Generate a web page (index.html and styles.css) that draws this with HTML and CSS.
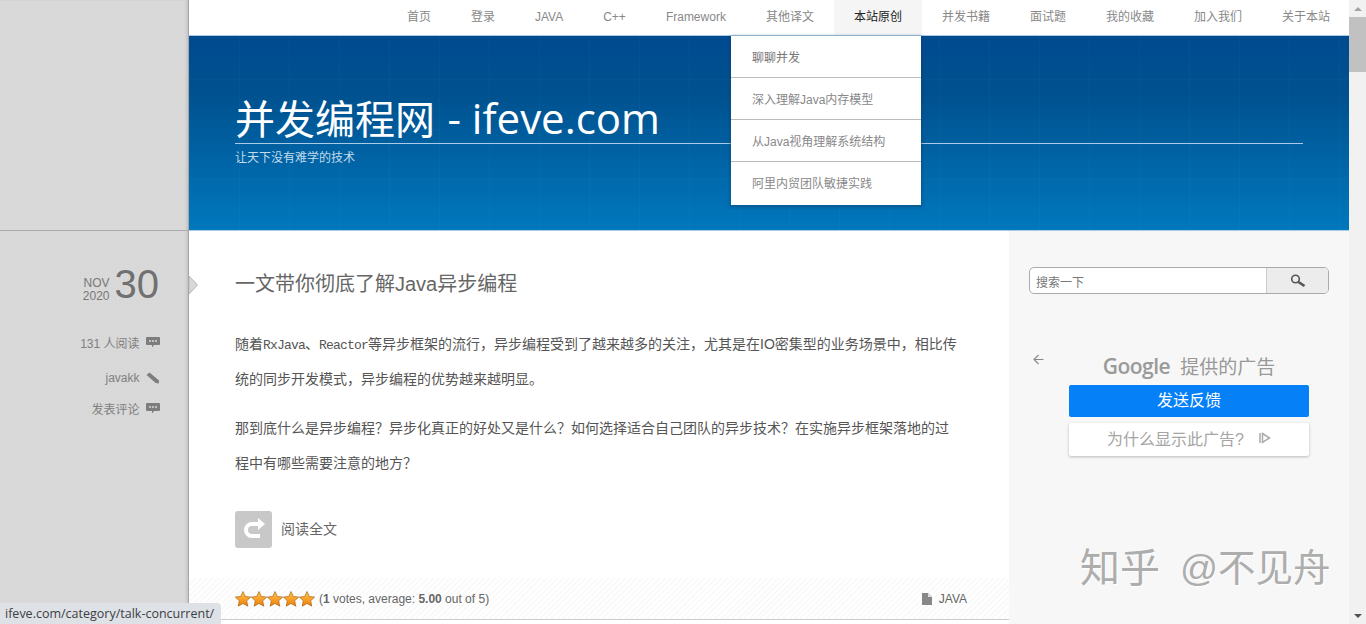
FILE: index.html
```html
<!DOCTYPE html>
<html lang="zh">
<head>
    <meta charset="UTF-8">
    <title>并发编程网 - ifeve.com</title>
    <link rel="stylesheet" href="styles.css">
</head>
<body>
    <div class="page">
        <!-- Left rail with the post meta -->
        <aside class="rail">
            <div class="rail-top"></div>
            <div class="post-date">
                <div class="month-year"><span>NOV</span><span>2020</span></div>
                <div class="day">30</div>
            </div>
            <ul class="post-meta">
                <li>131 人阅读
                    <svg class="meta-icon" viewBox="0 0 14 12"><path d="M1 1h12a1 1 0 0 1 1 1v6a1 1 0 0 1-1 1H8l-2 2.500V9H1a1 1 0 0 1-1-1V2a1 1 0 0 1 1-1z"/><path class="dots" d="M3 4.200h2v1.600H3zM6 4.200h2v1.600H6zM9 4.200h2v1.600H9z"/></svg>
                </li>
                <li>javakk
                    <svg class="meta-icon" viewBox="0 0 14 12"><path d="M3.500 0.500l9.500 8-0.200 3-3-0.500-9.300-8z"/></svg>
                </li>
                <li>发表评论
                    <svg class="meta-icon" viewBox="0 0 14 12"><path d="M1 1h12a1 1 0 0 1 1 1v6a1 1 0 0 1-1 1H8l-2 2.500V9H1a1 1 0 0 1-1-1V2a1 1 0 0 1 1-1z"/><path class="dots" d="M3 4.200h2v1.600H3zM6 4.200h2v1.600H6zM9 4.200h2v1.600H9z"/></svg>
                </li>
            </ul>
        </aside>

        <div class="wrap">
            <nav class="topnav">
                <a href="#">首页</a>
                <a href="#">登录</a>
                <a href="#">JAVA</a>
                <a href="#">C++</a>
                <a href="#">Framework</a>
                <a href="#">其他译文</a>
                <a href="#" class="active">本站原创</a>
                <a href="#">并发书籍</a>
                <a href="#">面试题</a>
                <a href="#">我的收藏</a>
                <a href="#">加入我们</a>
                <a href="#">关于本站</a>
            </nav>

            <header class="banner">
                <h1>并发编程网 <span class="domain">- ifeve.com</span></h1>
                <p>让天下没有难学的技术</p>
            </header>

            <div class="content">
                <main class="article">
                    <div class="article-body">
                        <h2>一文带你彻底了解Java异步编程</h2>
                        <p>随着<span class="mono">RxJava</span>、<span class="mono">Reactor</span>等异步框架的流行，异步编程受到了越来越多的关注，尤其是在IO密集型的业务场景中，相比传<br>统的同步开发模式，异步编程的优势越来越明显。</p>
                        <p>那到底什么是异步编程？异步化真正的好处又是什么？如何选择适合自己团队的异步技术？在实施异步框架落地的过<br>程中有哪些需要注意的地方？</p>
                        <a href="#" class="read-more">
                            <span class="read-icon">
                                <svg viewBox="0 0 37 37" width="37" height="37"><path d="M24 13h-7a6 6 0 0 0 0 12h8" fill="none" stroke="#fff" stroke-width="4"/><path d="M23 7l7 6-7 6z" fill="#fff"/></svg>
                            </span>
                            <span class="read-label">阅读全文</span>
                        </a>
                    </div>
                    <footer class="rating-bar">
                        <div class="rating">
                            <span class="stars">
                                <svg viewBox="0 0 16 16"><use href="#star"/></svg>
                                <svg viewBox="0 0 16 16"><use href="#star"/></svg>
                                <svg viewBox="0 0 16 16"><use href="#star"/></svg>
                                <svg viewBox="0 0 16 16"><use href="#star"/></svg>
                                <svg viewBox="0 0 16 16"><use href="#star"/></svg>
                            </span>
                            <span>(<b>1</b> votes, average: <b>5.00</b> out of 5)</span>
                        </div>
                        <div class="category">
                            <svg viewBox="0 0 10 12" width="10" height="12"><path d="M0 0h6l4 4v8H0z" fill="#888"/><path d="M6 0v4h4" fill="#ddd"/></svg>
                            JAVA
                        </div>
                    </footer>
                </main>

                <aside class="sidebar">
                    <form class="search">
                        <span class="search-input">搜索一下</span>
                        <span class="search-btn">
                            <svg viewBox="0 0 16 14" width="16" height="14"><circle cx="5.500" cy="5" r="3.800" fill="none" stroke="#555" stroke-width="1.600"/><path d="M8.500 8l6 4" stroke="#555" stroke-width="2.600"/></svg>
                        </span>
                    </form>
                    <div class="ad">
                        <div class="ad-head">
                            <svg class="ad-back" viewBox="0 0 11 11" width="11" height="11"><path d="M10.500 5.500H1M5.500 1L1 5.500 5.500 10" fill="none" stroke="#888" stroke-width="1.100"/></svg>
                            <span class="google">Google</span>
                            <span class="ad-label">提供的广告</span>
                        </div>
                        <div class="ad-btn primary">发送反馈</div>
                        <div class="ad-btn secondary">为什么显示此广告?
                            <svg viewBox="0 0 12 12" width="12" height="12"><path d="M1 1v10" stroke="#aaa" stroke-width="1.500"/><path d="M3.500 1.500l7 4.500-7 4.500z" fill="none" stroke="#aaa" stroke-width="1.500"/></svg>
                        </div>
                    </div>
                </aside>
            </div>
        </div>
    </div>

    <div class="scrollbar">
        <span class="arrow up"></span>
        <div class="track"><div class="thumb"></div></div>
        <span class="arrow down"></span>
    </div>

    <!-- Things lying over the page -->
    <svg class="date-notch" viewBox="0 0 9 20" width="9" height="20"><path d="M0 1l8.500 9L0 19z" fill="#d8d8d8" stroke="#b8b8b8" stroke-width="1"/></svg>
    <ul class="dropdown">
        <li>聊聊并发</li>
        <li>深入理解Java内存模型</li>
        <li>从Java视角理解系统结构</li>
        <li>阿里内贸团队敏捷实践</li>
    </ul>
    <div class="watermark"><span>知乎</span><span class="handle">@不见舟</span></div>
    <div class="status-bubble">ifeve.com/category/talk-concurrent/</div>

    <svg width="0" height="0" class="defs">
        <defs>
            <linearGradient id="starfill" x1="0" y1="0" x2="0" y2="1">
                <stop offset="0" stop-color="#ffc94d"/>
                <stop offset="1" stop-color="#ee7d0a"/>
            </linearGradient>
            <path id="star" d="M8 .5l2.300 5 5.400.6-4 3.700 1.100 5.400L8 12.500l-4.800 2.700 1.100-5.400-4-3.700 5.400-.6z" fill="url(#starfill)" stroke="#a8651a" stroke-width=".7"/>
        </defs>
    </svg>
</body>
</html>
```

FILE: styles.css
```css
* {
    margin: 0;
    padding: 0;
    box-sizing: border-box;
}

body {
    height: 624px;
    display: flex;
    overflow: hidden;
    position: relative;
    font-family: "Liberation Sans", "Noto Sans CJK SC", sans-serif;
    font-size: 12px;
    color: #777;
    background: #fff;
}

a {
    color: inherit;
    text-decoration: none;
}

ul {
    list-style: none;
}

.page {
    flex: 1;
    display: flex;
    min-width: 0;
}

/* Left rail */
.rail {
    width: 189px;
    flex-shrink: 0;
    background-color: #d8d8d8;
    background-image: radial-gradient(circle, rgba(255, 255, 255, 0.05) 1px, transparent 1px);
    background-size: 4px 4px;
    border-right: 1px solid #a6a6a6;
    box-shadow: inset -2px 0 2px rgba(0, 0, 0, 0.08);
}

.rail-top {
    height: 231px;
    border-bottom: 1px solid #aaa;
}

.post-date {
    display: flex;
    justify-content: flex-end;
    align-items: center;
    gap: 5px;
    padding: 31px 29px 0 0;
    color: #777;
}

.month-year {
    display: flex;
    flex-direction: column;
    align-items: flex-end;
    font-size: 12px;
    line-height: 13px;
    padding-top: 11px;
}

.day {
    font-size: 40px;
    line-height: 44px;
    color: #707070;
}

.post-meta {
    margin-top: 26px;
    padding-right: 29px;
    color: #808080;
}

.post-meta li {
    display: flex;
    justify-content: flex-end;
    align-items: center;
    gap: 6px;
    height: 20px;
    margin-bottom: 16px;
}

.post-meta li:last-child {
    margin-top: -6px;
}

.meta-icon {
    width: 14px;
    height: 12px;
    margin-right: -0.500px;
    fill: #7d7d7d;
}

.meta-icon .dots {
    fill: #d8d8d8;
}

/* Main column */
.wrap {
    flex: 1;
    min-width: 0;
    display: flex;
    flex-direction: column;
}

.topnav {
    height: 35px;
    display: flex;
    justify-content: flex-end;
    background: #fff;
    color: #888;
}

.topnav a {
    padding: 0 20px;
    line-height: 34px;
    white-space: nowrap;
    position: relative;
    left: 1px;
}

.topnav a.active {
    background: #f5f5f5;
    color: #222;
}

.banner {
    height: 196px;
    padding: 58px 46px 0;
    color: #fff;
    background-color: #0064a8;
    background-image:
        repeating-linear-gradient(90deg, rgba(255, 255, 255, 0.025) 0 1px, transparent 1px 50px),
        repeating-linear-gradient(0deg, rgba(255, 255, 255, 0.025) 0 1px, transparent 1px 50px),
        linear-gradient(180deg, #004a90 0%, #00518f 30%, #0078bd 100%);
    border-top: 1px solid #a8c8e4;
    border-bottom: 1px solid #a8c8e4;
}

.banner h1 {
    font-family: "Open Sans", "Noto Sans CJK SC", sans-serif;
    font-size: 40px;
    font-weight: 400;
    line-height: 49px;
    white-space: nowrap;
    border-bottom: 1px solid #a9cbe6;
}

.domain {
    font-size: 42px;
    line-height: 40px;
    margin-left: 2px;
}

.banner p {
    margin-top: 7px;
    line-height: 14px;
    color: #c3dcec;
}

.content {
    flex: 1;
    display: flex;
    min-height: 0;
}

.article {
    flex: 1;
    display: flex;
    flex-direction: column;
    min-width: 0;
}

.article-body {
    padding: 38px 40px 0 46px;
    height: 347px;
}

.article-body h2 {
    font-size: 20px;
    font-weight: 400;
    line-height: 30px;
    color: #666;
    margin-bottom: 28px;
}

.article-body p {
    font-size: 14px;
    line-height: 35px;
    color: #555;
    margin-bottom: 14px;
}

.mono {
    font-family: "Liberation Mono", monospace;
    font-size: 13px;
    letter-spacing: -0.800px;
    line-height: 1;
}

.read-more {
    display: flex;
    align-items: center;
    gap: 9px;
    margin-top: 30px;
    font-size: 14px;
    color: #666;
}

.read-label {
    padding-bottom: 3px;
}

.read-icon {
    width: 37px;
    height: 37px;
    background: #c8c8c8;
    border-radius: 3px;
}

.read-icon svg {
    display: block;
}

.rating-bar {
    height: 42px;
    padding: 0 42px 0 46px;
    display: flex;
    justify-content: space-between;
    align-items: center;
    border-bottom: 1px solid #ccc;
    background: repeating-linear-gradient(135deg, #fafafa 0 2px, #fff 2px 4px);
    color: #666;
}

.rating {
    display: flex;
    align-items: center;
    gap: 4px;
}

.stars {
    display: flex;
}

.stars svg {
    width: 16px;
    height: 16px;
}

.category {
    display: flex;
    align-items: center;
    gap: 7px;
}

/* Sidebar */
.sidebar {
    width: 340px;
    flex-shrink: 0;
    background: #f7f7f7;
    padding: 36px 20px 0;
}

.search {
    display: flex;
    height: 27px;
    border: 1px solid #aaa;
    border-radius: 5px;
    overflow: hidden;
    background: #fff;
}

.search-input {
    flex: 1;
    padding-left: 6px;
    line-height: 30px;
    color: #777;
}

.search-btn {
    width: 62px;
    display: flex;
    align-items: center;
    justify-content: center;
    background: #ececec;
    border-left: 1px solid #ccc;
}

.ad {
    margin-top: 58px;
    padding: 0 20px 0 40px;
}

.ad-head {
    position: relative;
    display: flex;
    justify-content: center;
    align-items: center;
    gap: 10px;
    height: 33px;
    padding-bottom: 6px;
    color: #999;
}

.ad-back {
    position: absolute;
    left: -36px;
    top: 2px;
}

.google {
    font-family: "Open Sans", sans-serif;
    font-size: 21px;
    font-weight: 600;
    letter-spacing: -0.500px;
    color: #9a9a9a;
}

.ad-label {
    font-size: 19px;
}

.ad-btn {
    text-align: center;
    border-radius: 2px;
}

.ad-btn.primary {
    height: 32px;
    line-height: 31px;
    font-size: 16px;
    color: #fff;
    background: #0580f6;
}

.ad-btn.secondary {
    height: 33px;
    margin-top: 6px;
    padding-bottom: 3px;
    display: flex;
    justify-content: center;
    align-items: center;
    gap: 15px;
    font-size: 16px;
    color: #a5a5a5;
    background: #fff;
    box-shadow: 0 1px 3px rgba(0, 0, 0, 0.25);
}

/* Scrollbar */
.scrollbar {
    width: 17px;
    flex-shrink: 0;
    display: flex;
    flex-direction: column;
    background: #f1f1f1;
}

.track {
    flex: 1;
}

.thumb {
    height: 55px;
    background: #c1c1c1;
}

.arrow {
    height: 17px;
    display: flex;
    align-items: center;
    justify-content: center;
}

.arrow::before {
    content: '';
    border-left: 4px solid transparent;
    border-right: 4px solid transparent;
}

.arrow.up::before {
    border-bottom: 4px solid #a3a3a3;
}

.arrow.down::before {
    border-top: 4px solid #505050;
}

/* Overlays */
.date-notch {
    position: absolute;
    left: 189px;
    top: 275px;
}

.dropdown {
    position: absolute;
    left: 731px;
    top: 36px;
    width: 190px;
    background: #fff;
    box-shadow: 0 1px 3px 1px rgba(20, 60, 90, 0.45);
    color: #888;
}

.dropdown li {
    height: 42px;
    padding-left: 21px;
    line-height: 44px;
    border-bottom: 1px solid #bbb;
}

.dropdown li:first-child {
    color: #777;
}

.dropdown li:last-child {
    height: 43px;
    border-bottom: none;
}

.watermark {
    position: absolute;
    left: 1080px;
    top: 542px;
    display: flex;
    align-items: center;
    gap: 20px;
    font-size: 40px;
    line-height: 52px;
    white-space: nowrap;
    color: #adadad;
    text-shadow: 1px 1px 0 #fff;
}

.handle {
    font-size: 37.500px;
}

.status-bubble {
    position: absolute;
    left: 0;
    bottom: 0;
    height: 21px;
    padding: 0 7px 0 5px;
    font-family: "Open Sans", sans-serif;
    font-size: 12.500px;
    line-height: 22px;
    color: #3c4043;
    background: #dee1e6;
    border-top-right-radius: 4px;
}

.defs {
    position: absolute;
}
```
